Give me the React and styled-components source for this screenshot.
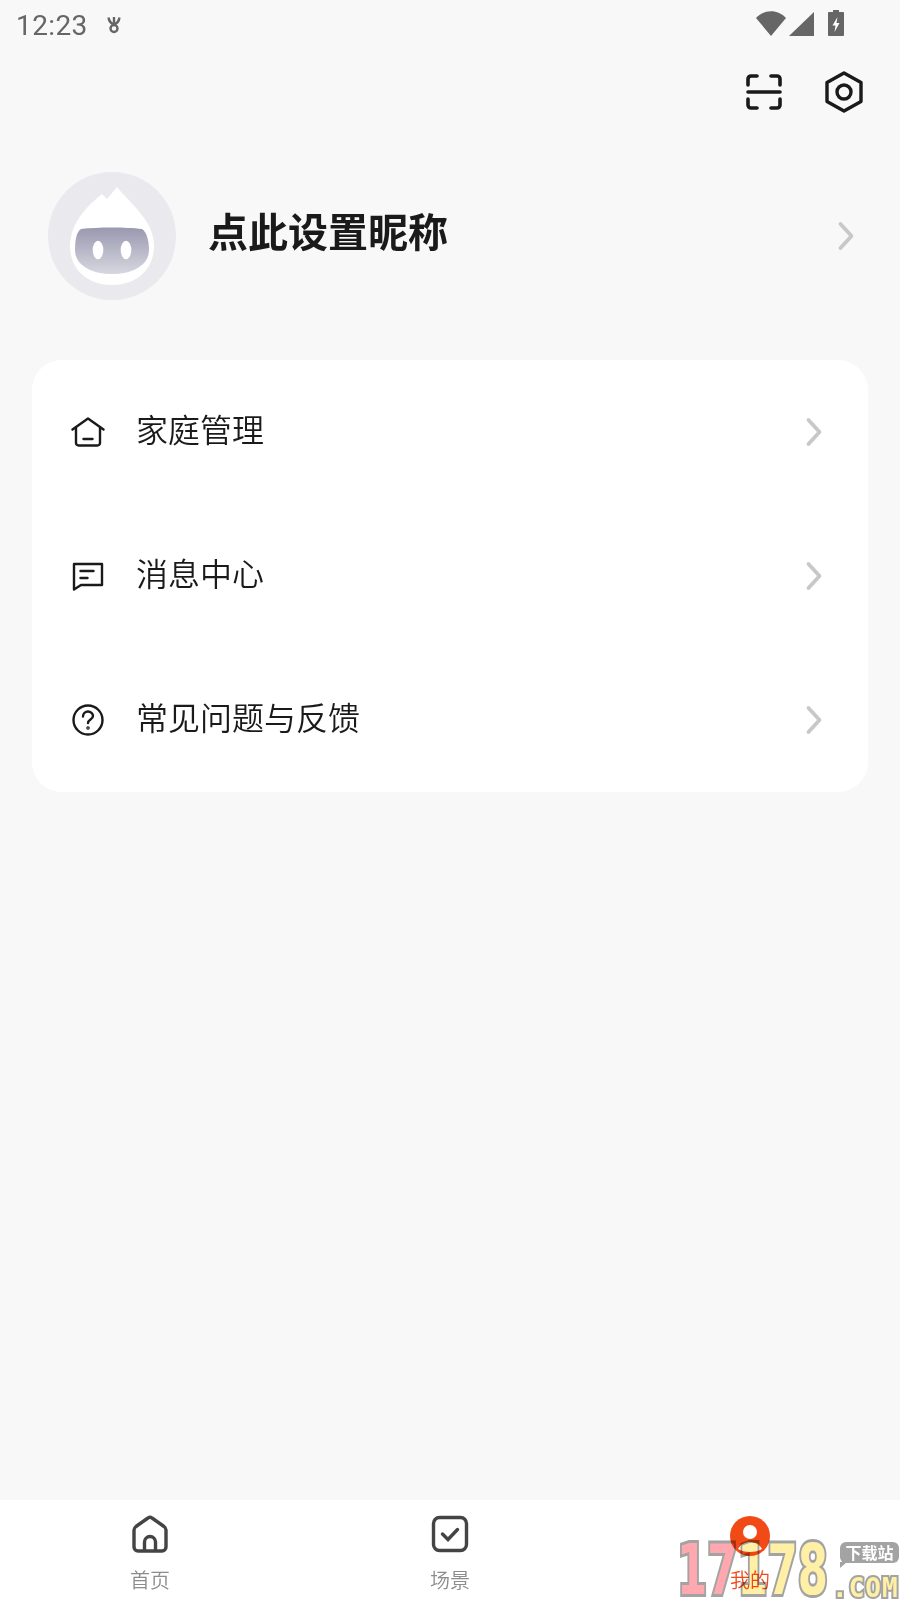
import React from 'react';
import styled, { createGlobalStyle } from 'styled-components';

const Global = createGlobalStyle`
  html, body { margin: 0; padding: 0; background: #f8f8f8; }
  body { font-family: "Noto Sans CJK SC", "Noto Sans", sans-serif; }
`;
const Page = styled.div`
  width: 900px; height: 1600px; position: relative; overflow: hidden;
  display: flex; flex-direction: column; background: #f8f8f8;
`;
const StatusBar = styled.div`
  height: 50px; flex: none; display: flex; align-items: center; justify-content: space-between;
  padding: 0 56px 0 16px; box-sizing: border-box; color: #666;
`;
const StatusLeft = styled.div`display: flex; align-items: center; gap: 19px;`;
const Time = styled.span`font: 400 28px Roboto, sans-serif; letter-spacing: 0.4px;`;
const StatusRight = styled.div`display: flex; align-items: center; gap: 14px; margin-top: -4px;`;
const Toolbar = styled.div`
  height: 84px; flex: none; display: flex; justify-content: flex-end; align-items: center; gap: 43px;
  padding: 0 37px 0 0;
`;
const Profile = styled.div`
  margin-top: 38px; height: 128px; flex: none; display: flex; align-items: center;
  padding: 0 45px 0 48px;
`;
const Nick = styled.div`
  margin-left: 32px; flex: 1; font-size: 40px; font-weight: 700; color: #1a1a1a; line-height: 1;
  position: relative; top: -6px;
`;
const Card = styled.div`
  margin: 60px 32px 0; height: 432px; flex: none; background: #fff; border-radius: 30px;
  display: flex; flex-direction: column; padding: 0 0 0 39px; box-sizing: border-box;
`;
const Row = styled.div`
  height: 144px; flex: none; display: flex; align-items: center; gap: 31px; padding-right: 45px;
`;
const RowText = styled.div`
  flex: 1; font-size: 32px; font-weight: 350; color: #1a1a1a; line-height: 1; position: relative; top: -4px;
`;
const Spacer = styled.div`flex: 1;`;
const TabBar = styled.div`
  height: 100px; flex: none; background: #fff; position: relative;
  display: grid; grid-template-columns: 300px 300px 300px;
`;
const Tab = styled.div`
  display: flex; flex-direction: column; align-items: center; padding-top: 15px;
`;
const TabLabel = styled.div`
  font-size: 20px; line-height: 24px; margin-top: 15px; font-weight: 350;
  color: ${p => (p.$active ? '#f24a1c' : '#8c8c8c')};
`;
const MeIconWrap = styled.div`height: 38px; margin-top: 1px; margin-bottom: -1px;`;
const Mark = styled.div`
  position: absolute; left: 675px; top: 38px; width: 225px; height: 62px; overflow: hidden;
  pointer-events: none; mix-blend-mode: multiply;
`;
const MarkDigits = styled.div`
  position: absolute; left: 2px; top: 1px; display: flex; transform-origin: left top; transform: scaleX(0.62);
  font: 700 70px/62px "DejaVu Sans", sans-serif;
`;
const Digit = styled.span`
  color: ${p => p.$c}; -webkit-text-stroke: 6px #a3a3a3; paint-order: stroke fill;
`;
const MarkBadge = styled.div`
  position: absolute; left: 165px; top: 4px; width: 59px; height: 21px; border-radius: 6px; background: #a3a3a3;
  color: #fff; font-size: 16px; font-weight: 700; line-height: 21px; text-align: center; white-space: nowrap;
  &::after {
    content: ''; position: absolute; left: 0; bottom: -5px; border-style: solid;
    border-width: 6px 7px 0 0; border-color: #a3a3a3 transparent transparent transparent;
  }
`;
const MarkCom = styled.div`
  position: absolute; left: 157px; top: 35px; font: 700 26px/30px "DejaVu Sans Mono", monospace;
  letter-spacing: 1px; white-space: nowrap;
  color: #fff0a6; -webkit-text-stroke: 4px #a3a3a3; paint-order: stroke fill;
`;

const Chevron = () => (
  <svg width="18" height="30" viewBox="0 0 18 30" fill="none">
    <path d="M3.500 3L14.500 15L3.500 27" stroke="#c8c8c8" strokeWidth="3.800" strokeLinecap="round" strokeLinejoin="round" />
  </svg>
);

const Avatar = () => (
  <svg width="128" height="128" viewBox="0 0 128 128">
    <defs>
      <linearGradient id="face" x1="0" y1="0" x2="0" y2="1">
        <stop offset="0" stopColor="#9a98b0" />
        <stop offset="1" stopColor="#d7d7e0" />
      </linearGradient>
    </defs>
    <circle cx="64" cy="64" r="64" fill="#e9e9ee" />
    <path d="M69 15C76 24 85 31 93 42C101 52 106 62 106 74C106 98 88 113 64 113C40 113 22 98 22 74C22 60 29 47 37 38C43 31 49 26 54 22L59 27Z" fill="#fff" />
    <path d="M33 57C50 55 78 55 94 57C99 60 101 70 101 78C101 93 85 102 64 102C43 102 27 93 27 78C27 70 28 60 33 57Z" fill="url(#face)" />
    <ellipse cx="50" cy="78" rx="5.300" ry="9.300" fill="#fff" />
    <ellipse cx="78" cy="78" rx="5.300" ry="9.300" fill="#fff" />
  </svg>
);

const stroke = { fill: 'none', stroke: '#1a1a1a' };

export default function App() {
  return (
    <Page>
      <Global />
      <StatusBar>
        <StatusLeft>
          <Time>12:23</Time>
          <svg width="14" height="18" viewBox="0 0 14 18" fill="none" stroke="#666" strokeWidth="2.400">
            <circle cx="7" cy="12.500" r="3.500" />
            <path d="M1.500 1.500C2 5 4 7.500 7 8.500C10 7.500 12 5 12.500 1.500M7 1v7.500" />
          </svg>
        </StatusLeft>
        <StatusRight>
          <svg width="58" height="26" viewBox="0 0 58 26" fill="#666">
            <path d="M0 8C8-1 22-1 30 8L15 26Z" />
            <path d="M33 26L58 2v24Z" />
          </svg>
          <svg width="16" height="26" viewBox="0 0 16 26">
            <path d="M5 0h6v2h4a1 1 0 0 1 1 1v22a1 1 0 0 1-1 1H1a1 1 0 0 1-1-1V3a1 1 0 0 1 1-1h4Z" fill="#666" />
            <path d="M9.500 7L4.500 15.500h3l-1 6.500 5-9H8.500Z" fill="#fff" />
          </svg>
        </StatusRight>
      </StatusBar>
      <Toolbar>
        <svg width="36" height="36" viewBox="0 0 36 36" {...stroke} strokeWidth="3.600" strokeLinecap="round">
          <path d="M2 11V5a3 3 0 0 1 3-3h6M25 2h6a3 3 0 0 1 3 3v6M2 25v6a3 3 0 0 0 3 3h6M25 34h6a3 3 0 0 0 3-3v-6M2 18h32" />
        </svg>
        <svg width="38" height="42" viewBox="0 0 38 42" {...stroke} strokeWidth="3.400" strokeLinejoin="round">
          <path d="M19 2l17 9.500v19L19 40 2 30.500v-19Z" />
          <circle cx="19" cy="21" r="7" />
        </svg>
      </Toolbar>
      <Profile>
        <Avatar />
        <Nick>点此设置昵称</Nick>
        <Chevron />
      </Profile>
      <Card>
        <Row>
          <svg width="34" height="30" viewBox="0 0 34 30" {...stroke} strokeWidth="2.400" strokeLinejoin="round" strokeLinecap="round">
            <path d="M1.500 12.500L17 1.500 32.500 12.500M5 10.500V26a2.500 2.500 0 0 0 2.500 2.500h19A2.500 2.500 0 0 0 29 26V10.500M12.500 22h9" />
          </svg>
          <RowText>家庭管理</RowText>
          <Chevron />
        </Row>
        <Row>
          <svg width="34" height="30" viewBox="0 0 34 30" {...stroke} strokeWidth="2.400" strokeLinejoin="round" strokeLinecap="round">
            <path d="M3 3h28v21H10l-7 4.500ZM9.500 10h13M9.500 17h7" />
          </svg>
          <RowText>消息中心</RowText>
          <Chevron />
        </Row>
        <Row>
          <svg width="34" height="34" viewBox="0 0 34 34" {...stroke} strokeWidth="2.400" strokeLinecap="round">
            <circle cx="17" cy="17" r="14.500" />
            <path d="M12 13.500c0-3 2.400-5 5-5s5 2 5 4.500c0 3.500-5 3.500-5 7" />
            <circle cx="17" cy="25" r="0.600" />
          </svg>
          <RowText>常见问题与反馈</RowText>
          <Chevron />
        </Row>
      </Card>
      <Spacer />
      <TabBar>
        <Tab>
          <svg width="38" height="38" viewBox="0 0 38 38" fill="none" stroke="#444" strokeWidth="3.400" strokeLinejoin="round">
            <path d="M3 15Q3 13 5 11.500L17 3Q19 1.500 21 3L33 11.500Q35 13 35 15V32a4 4 0 0 1-4 4H7a4 4 0 0 1-4-4Z" />
            <path d="M13.500 36V27a5.500 5.500 0 0 1 11 0v9" />
          </svg>
          <TabLabel>首页</TabLabel>
        </Tab>
        <Tab>
          <svg width="38" height="38" viewBox="0 0 38 38" fill="none" stroke="#444" strokeWidth="3.400" strokeLinecap="round">
            <rect x="2.500" y="2.500" width="33" height="33" rx="6" />
            <path d="M11.500 19l5.500 5.500 9.500-10" />
          </svg>
          <TabLabel>场景</TabLabel>
        </Tab>
        <Tab>
          <MeIconWrap>
            <svg width="40" height="40" viewBox="0 0 40 40">
              <circle cx="20" cy="20" r="20" fill="#f24a16" />
              <circle cx="20" cy="16" r="7" fill="#fff" />
              <path d="M8 33c3-5 7-7 12-7s9 2 12 7c-6 4-18 4-24 0Z" fill="#fff" />
            </svg>
          </MeIconWrap>
          <TabLabel $active>我的</TabLabel>
        </Tab>
        <Mark>
          <MarkDigits>
            <Digit $c="#ffa8b0">1</Digit>
            <Digit $c="#ffa8b0">7</Digit>
            <Digit $c="#fff0a6">1</Digit>
            <Digit $c="#fff0a6">7</Digit>
            <Digit $c="#fff0a6">8</Digit>
          </MarkDigits>
          <MarkBadge>下载站</MarkBadge>
          <MarkCom>.COM</MarkCom>
        </Mark>
      </TabBar>
    </Page>
  );
}
